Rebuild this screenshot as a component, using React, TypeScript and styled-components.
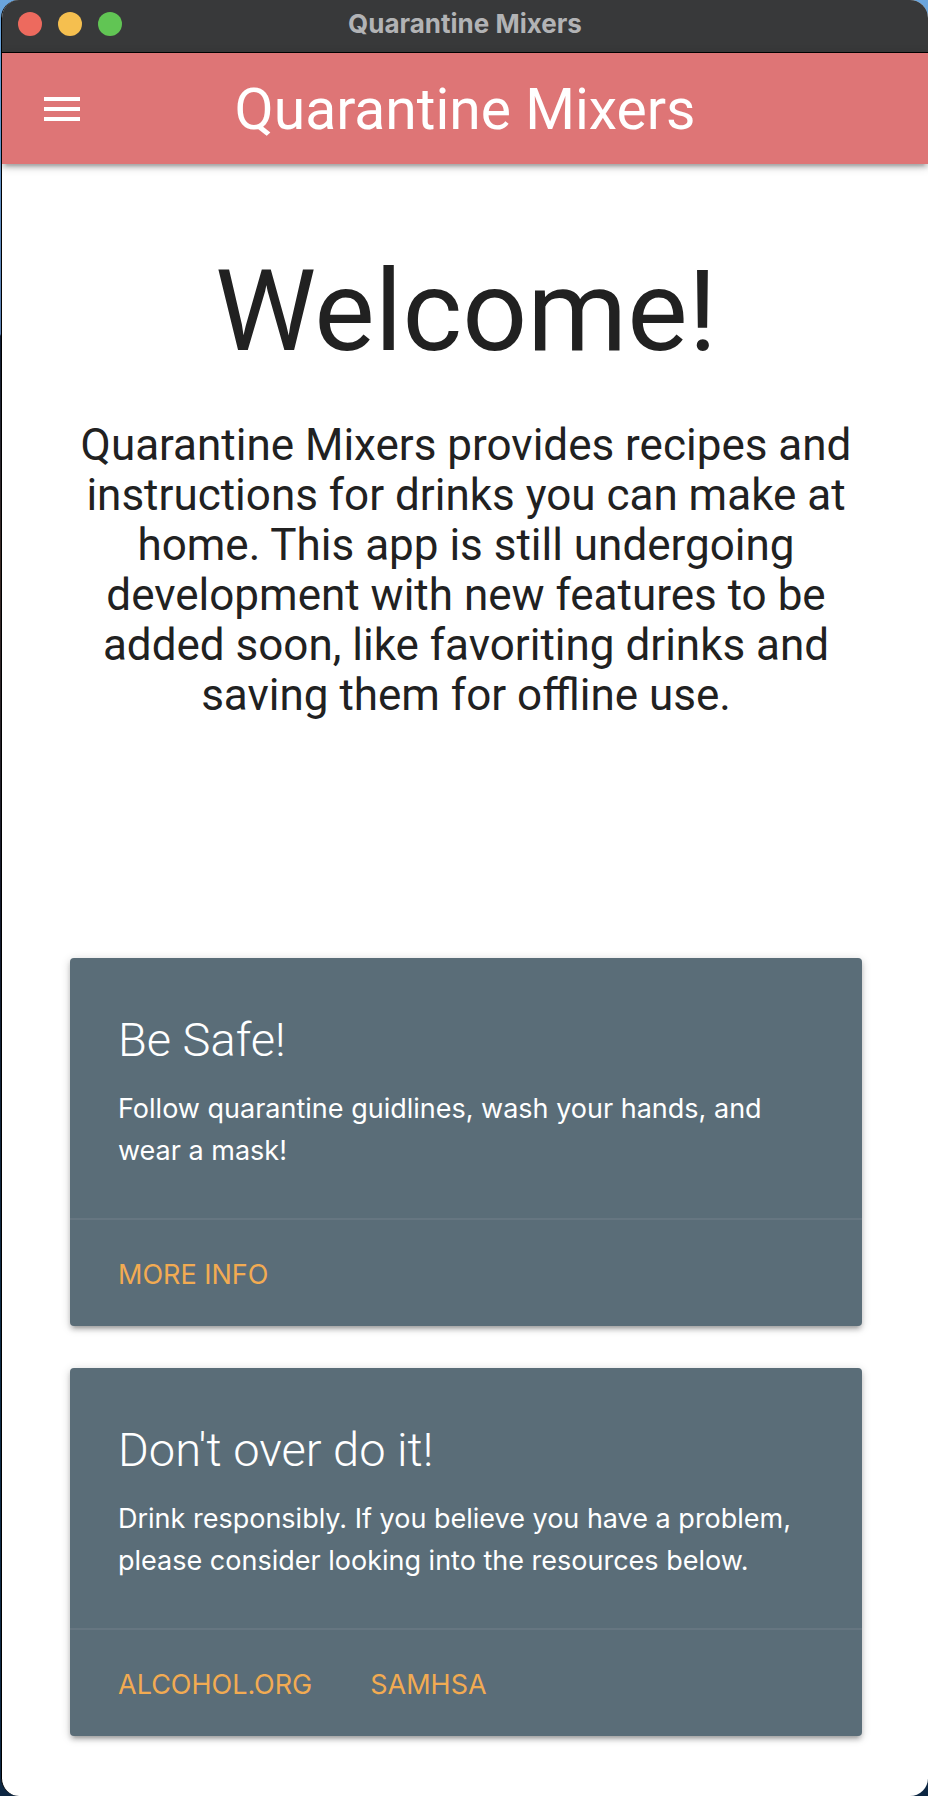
import React from "react";
import styled, { createGlobalStyle } from "styled-components";

const GlobalStyle = createGlobalStyle`
  *, *::before, *::after { box-sizing: border-box; }
  body {
    margin: 0;
    font-family: Inter, "Liberation Sans", sans-serif;
    color: #212121;
    background: #0b1a2b;
  }
  h1, h2, p { margin: 0; }
`;

const displayFont = `Roboto, "Liberation Sans", sans-serif`;

const Desktop = styled.div`
  padding-left: 1px;
  background: linear-gradient(#6aa5dd 0, #5b7fb0 334px, #101d33 336px, #3a2a26 560px, #12182a 900px, #0e2a45 1300px, #0d2743 100%);
`;

const AppWindow = styled.div`
  display: flex;
  flex-direction: column;
  min-height: 100vh;
  border-left: 1px solid #000;
  border-radius: 18px;
  background: #fff;
  overflow: hidden;
`;

const TitleBar = styled.header`
  display: grid;
  grid-template-columns: 1fr auto 1fr;
  align-items: center;
  height: 53px;
  padding: 0 16px 4px;
  background: #38393a;
  border-bottom: 1px solid #000;
`;

const WindowControls = styled.div`
  display: flex;
  gap: 16px;
`;

const WindowControl = styled.button<{ $color: string }>`
  width: 24px;
  height: 24px;
  padding: 0;
  border: 0;
  border-radius: 50%;
  background: ${(p) => p.$color};
`;

const WindowTitle = styled.span`
  font-size: 26px;
  font-weight: 700;
  line-height: 32px;
  color: #b2b3b5;
`;

const NavBar = styled.nav`
  display: grid;
  grid-template-columns: 1fr auto 1fr;
  align-items: center;
  height: 111px;
  padding: 0 36px;
  background: #de7576;
  color: #fff;
  box-shadow: 0 4px 4px rgba(0, 0, 0, 0.14), 0 6px 2px -4px rgba(0, 0, 0, 0.12), 0 2px 10px rgba(0, 0, 0, 0.2);
`;

const MenuButton = styled.button`
  width: 48px;
  height: 48px;
  padding: 0;
  border: 0;
  background: none;
  color: inherit;
  svg { display: block; }
`;

const Brand = styled.a`
  font-family: ${displayFont};
  font-size: 57px;
  line-height: 64px;
  padding-top: 2px;
  color: inherit;
  text-decoration: none;
`;

const Main = styled.main`
  display: flex;
  flex-direction: column;
  padding: 82px 66px 60px 68px;
`;

const Intro = styled.section`
  text-align: center;
  padding-bottom: 238px;
`;

const Heading = styled.h1`
  font-family: ${displayFont};
  font-size: 114px;
  font-weight: 400;
  line-height: 130px;
  margin-bottom: 44px;
`;

const Lead = styled.p`
  font-family: ${displayFont};
  font-size: 44px;
  line-height: 50px;
`;

const Cards = styled.section`
  display: flex;
  flex-direction: column;
  gap: 42px;
`;

const CardBox = styled.article`
  border-radius: 4px;
  background: #5a6d78;
  color: #fff;
  box-shadow: 0 4px 4px rgba(0, 0, 0, 0.14), 0 6px 2px -4px rgba(0, 0, 0, 0.12), 0 2px 10px rgba(0, 0, 0, 0.2);
`;

const CardContent = styled.div`
  padding: 50px 48px 46px;
`;

const CardTitle = styled.h2`
  font-family: ${displayFont};
  font-size: 47px;
  font-weight: 300;
  line-height: 64px;
  margin-bottom: 16px;
`;

const CardText = styled.p`
  font-size: 27px;
  line-height: 42px;
`;

const CardActions = styled.div`
  display: flex;
  gap: 58px;
  padding: 34px 48px 30px;
  border-top: 2px solid #667681;
`;

const CardLink = styled.a`
  font-size: 27px;
  line-height: 42px;
  color: #f2ab52;
  text-decoration: none;
  text-transform: uppercase;
`;

type CardProps = {
  title: string;
  text: string;
  links: { label: string; href: string }[];
};

const Card = ({ title, text, links }: CardProps) => (
  <CardBox>
    <CardContent>
      <CardTitle>{title}</CardTitle>
      <CardText>{text}</CardText>
    </CardContent>
    <CardActions>
      {links.map((link) => (
        <CardLink key={link.label} href={link.href}>{link.label}</CardLink>
      ))}
    </CardActions>
  </CardBox>
);

export default function App() {
  return (
    <Desktop>
      <GlobalStyle />
      <AppWindow>
        <TitleBar>
          <WindowControls>
            <WindowControl $color="#ed6a5e" aria-label="Close" />
            <WindowControl $color="#f5bf4f" aria-label="Minimize" />
            <WindowControl $color="#61c554" aria-label="Zoom" />
          </WindowControls>
          <WindowTitle>Quarantine Mixers</WindowTitle>
        </TitleBar>
        <NavBar>
          <MenuButton aria-label="Open menu">
            <svg width="48" height="48" viewBox="0 0 24 24" fill="currentColor" aria-hidden="true">
              <path d="M3 18h18v-2H3v2zm0-5h18v-2H3v2zm0-7v2h18V6H3z" />
            </svg>
          </MenuButton>
          <Brand href="#home">Quarantine Mixers</Brand>
        </NavBar>
        <Main>
          <Intro>
            <Heading>Welcome!</Heading>
            <Lead>
              Quarantine Mixers provides recipes and instructions for drinks you can make at home. This app is
              still undergoing development with new features to be added soon, like favoriting drinks and saving
              them for offline use.
            </Lead>
          </Intro>
          <Cards>
            <Card
              title="Be Safe!"
              text="Follow quarantine guidlines, wash your hands, and wear a mask!"
              links={[{ label: "More info", href: "#more-info" }]}
            />
            <Card
              title="Don't over do it!"
              text="Drink responsibly. If you believe you have a problem, please consider looking into the resources below."
              links={[
                { label: "Alcohol.org", href: "#alcohol-org" },
                { label: "SAMHSA", href: "#samhsa" },
              ]}
            />
          </Cards>
        </Main>
      </AppWindow>
    </Desktop>
  );
}
